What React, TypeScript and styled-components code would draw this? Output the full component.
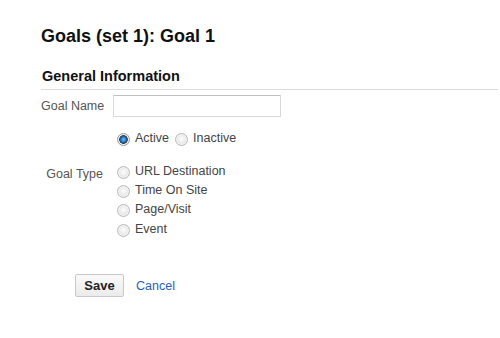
import styled, { createGlobalStyle } from "styled-components";
import { useState } from "react";

const GlobalStyle = createGlobalStyle`
  body {
    margin: 0;
    background: #fff;
    font-family: "Liberation Sans", Arial, sans-serif;
  }
`;

const Page = styled.div`
  padding: 25px 2px 0 41px;
  width: 500px;
  height: 338px;
  box-sizing: border-box;
`;

const Title = styled.h1`
  margin: 0;
  font-size: 18px;
  line-height: 22px;
  font-weight: bold;
  color: #111;
`;

const SectionHeader = styled.h2`
  margin: 20px 0 0 0;
  padding: 0 0 4px 1px;
  font-size: 14.5px;
  line-height: 18px;
  font-weight: bold;
  color: #111;
  border-bottom: 1px solid #dcdcdc;
`;

const Form = styled.div`
  margin-top: 5px;
  display: grid;
  grid-template-columns: 62px 1fr;
  column-gap: 10px;
  font-size: 12.5px;
`;

const Label = styled.div<{ offset?: number }>`
  text-align: right;
  white-space: nowrap;
  color: #555;
  line-height: ${(p) => (p.offset ? "20px" : "22px")};
  padding-top: ${(p) => p.offset ?? 0}px;
`;

const TextInput = styled.input`
  width: 168px;
  height: 22px;
  box-sizing: border-box;
  margin: 0;
  border: 1px solid #d9d9d9;
  border-top-color: #c0c0c0;
  border-radius: 1px;
  font: inherit;
  padding: 0 4px;
  outline: none;
`;

const Options = styled.div<{ inline?: boolean; gap?: number }>`
  display: flex;
  flex-direction: ${(p) => (p.inline ? "row" : "column")};
  gap: ${(p) => p.gap ?? 0}px;
  padding-left: 4px;
  margin-top: ${(p) => (p.inline ? 11 : 13)}px;
`;

const Option = styled.label<{ rowHeight: number }>`
  display: flex;
  align-items: center;
  height: ${(p) => p.rowHeight}px;
  color: #444;
  cursor: pointer;
`;

const Radio = styled.input`
  appearance: none;
  width: 13px;
  height: 13px;
  margin: 3px 5px 0 0;
  border-radius: 50%;
  border: 1px solid #b9b9b9;
  box-sizing: border-box;
  background: radial-gradient(circle at 50% 45%, #fdfdfd 0, #ececec 45%, #d6d6d6 100%);
  box-shadow: inset 0 0 0 1px #f4f4f4;

  &:checked {
    border-color: #9a9a9a;
    background: radial-gradient(
      circle at 50% 50%,
      #6cc0f5 0,
      #2f8ad6 2px,
      #1b4f86 3.5px,
      #3b3b3b 4.2px,
      #e6e6e6 4.8px
    );
  }
`;

const Spacer = styled.div``;

const Actions = styled.div`
  margin: 36px 0 0 34px;
  display: flex;
  align-items: center;
  gap: 12px;
`;

const SaveButton = styled.button`
  width: 49px;
  height: 23px;
  padding: 0;
  border: 1px solid #c8c8c8;
  border-radius: 2px;
  background: linear-gradient(#fafafa, #ebebeb);
  font-family: "Liberation Sans", Arial, sans-serif;
  font-size: 13px;
  font-weight: bold;
  color: #222;
  cursor: pointer;
`;

const CancelLink = styled.a`
  font-size: 12.5px;
  color: #1f5ec4;
  text-decoration: none;
  cursor: pointer;
`;

const goalTypes = ["URL Destination", "Time On Site", "Page/Visit", "Event"];

export default function App() {
    const [status, setStatus] = useState("active");
    const [goalType, setGoalType] = useState("");
    const [name, setName] = useState("");

    return (
        <>
            <GlobalStyle />
            <Page>
                <Title>Goals (set 1): Goal 1</Title>
                <SectionHeader>General Information</SectionHeader>
                <Form>
                    <Label>Goal Name</Label>
                    <TextInput value={name} onChange={(e) => setName(e.target.value)} />

                    <Spacer />
                    <Options inline gap={6}>
                        <Option rowHeight={20}>
                            <Radio type="radio" name="status" checked={status === "active"} onChange={() => setStatus("active")} />
                            Active
                        </Option>
                        <Option rowHeight={20}>
                            <Radio type="radio" name="status" checked={status === "inactive"} onChange={() => setStatus("inactive")} />
                            Inactive
                        </Option>
                    </Options>

                    <Label offset={16}>Goal Type</Label>
                    <Options>
                        {goalTypes.map((t) => (
                            <Option key={t} rowHeight={19.33}>
                                <Radio type="radio" name="goaltype" checked={goalType === t} onChange={() => setGoalType(t)} />
                                {t}
                            </Option>
                        ))}
                    </Options>
                </Form>
                <Actions>
                    <SaveButton>Save</SaveButton>
                    <CancelLink>Cancel</CancelLink>
                </Actions>
            </Page>
        </>
    );
}
